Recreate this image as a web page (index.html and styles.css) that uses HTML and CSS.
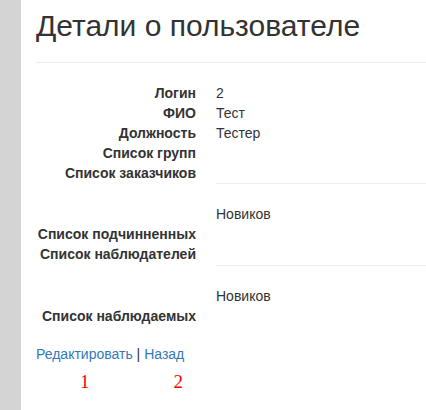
FILE: index.html
```html
<!DOCTYPE html>
<html lang="ru">
<head>
<meta charset="utf-8">
<title>Детали о пользователе</title>
<link rel="stylesheet" href="styles.css">
</head>
<body>
<div class="layout">
  <aside class="sidebar"></aside>
  <main class="content">
    <div class="page-header">
      <h2 class="title">Детали о пользователе</h2>
    </div>
    <dl class="details">
      <dt>Логин</dt><dd>2</dd>
      <dt>ФИО</dt><dd>Тест</dd>
      <dt>Должность</dt><dd>Тестер</dd>
      <dt>Список групп</dt><dd></dd>
      <dt>Список заказчиков</dt><dd></dd>
      <dt class="blank"></dt><dd class="sep"></dd>
      <dt class="blank"></dt><dd>Новиков</dd>
      <dt>Список подчинненных</dt><dd></dd>
      <dt>Список наблюдателей</dt><dd></dd>
      <dt class="blank"></dt><dd class="sep sep-tight"></dd>
      <dt class="blank"></dt><dd>Новиков</dd>
      <dt>Список наблюдаемых</dt><dd></dd>
    </dl>
    <p class="actions"><a href="#">Редактировать</a> | <a href="#">Назад</a></p>
    <div class="marks"><span class="mark mark-1">1</span><span class="mark mark-2">2</span></div>
  </main>
</div>
</body>
</html>
```
FILE: styles.css
```css
html, body {
  margin: 0;
  padding: 0;
  background: #fff;
}
body {
  font-family: "Liberation Sans", Arial, Helvetica, sans-serif;
  font-size: 14px;
  line-height: 20px;
  color: #333;
}
.layout {
  display: flex;
  min-height: 410px;
}
.sidebar {
  width: 21px;
  flex: none;
  background: #d4d4d4;
}
.content {
  flex: 1;
  padding: 0 0 0 15px;
}
.page-header {
  padding-top: 9px;
  padding-bottom: 20px;
  border-bottom: 1px solid #eee;
  margin-bottom: 20px;
}
.title {
  margin: 0;
  font-size: 30px;
  line-height: 33px;
  font-weight: 500;
  color: #333;
}
.details {
  display: grid;
  grid-template-columns: 160px 1fr;
  column-gap: 20px;
  margin: 0;
}
.details dt {
  font-weight: bold;
  text-align: right;
  min-height: 20px;
}
.details dd {
  margin: 0;
}
.details .sep {
  border-top: 1px solid #eee;
  height: 20px;
}
.details .sep-tight {
  margin-top: 1px;
}
.actions {
  margin: 18px 0 0 0;
}
.actions a {
  color: #337ab7;
  text-decoration: none;
}
.marks {
  display: flex;
  margin-top: 8px;
  font-family: "Liberation Serif", "Times New Roman", serif;
  font-size: 19px;
  line-height: 20px;
  color: #f00;
}
.mark-1 {
  margin-left: 44px;
}
.mark-2 {
  margin-left: 84px;
}
```
